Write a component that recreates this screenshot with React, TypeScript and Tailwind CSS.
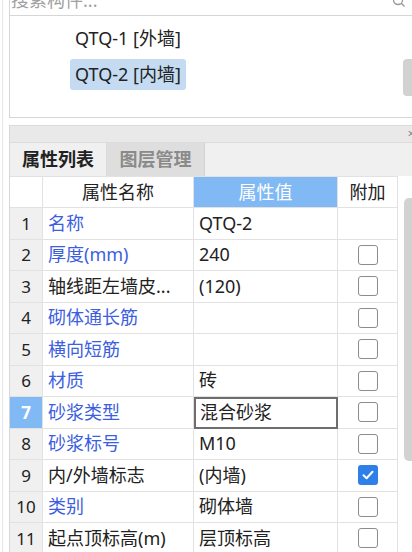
import React from 'react';

type Row = { name: string; blue: boolean; value: string; check?: boolean; checked?: boolean; editing?: boolean };

const rows: Row[] = [
  { name: '名称', blue: true, value: 'QTQ-2' },
  { name: '厚度(mm)', blue: true, value: '240', check: true },
  { name: '轴线距左墙皮...', blue: false, value: '(120)', check: true },
  { name: '砌体通长筋', blue: true, value: '', check: true },
  { name: '横向短筋', blue: true, value: '', check: true },
  { name: '材质', blue: true, value: '砖', check: true },
  { name: '砂浆类型', blue: true, value: '混合砂浆', check: true, editing: true },
  { name: '砂浆标号', blue: true, value: 'M10', check: true },
  { name: '内/外墙标志', blue: false, value: '(内墙)', check: true, checked: true },
  { name: '类别', blue: true, value: '砌体墙', check: true },
  { name: '起点顶标高(m)', blue: false, value: '层顶标高', check: true },
];

const CheckBox: React.FC<{ checked?: boolean }> = ({ checked }) =>
  checked ? (
    <div className="w-[20px] h-[20px] rounded-[3px] bg-[#2f7fe8] flex items-center justify-center">
      <svg width="14" height="14" viewBox="0 0 14 14" fill="none">
        <path d="M2.5 7.2 L5.6 10.2 L11.5 3.8" stroke="white" strokeWidth="2" strokeLinecap="round" strokeLinejoin="round" />
      </svg>
    </div>
  ) : (
    <div className="w-[20px] h-[20px] rounded-[3px] border-[1.5px] border-[#8c8c8c] bg-white" />
  );

const App: React.FC = () => {
  return (
    <div
      className="w-[412px] h-[552px] overflow-hidden bg-white flex text-[18px] text-[#222]"
      style={{ fontFamily: '"Noto Sans", "Noto Sans CJK SC", sans-serif' }}
    >
      <div className="w-[2px] shrink-0" />
      <div className="w-[7px] shrink-0 border-l border-[#e6e6e6]" />
      <div className="flex-1 flex flex-col min-w-0">
        {/* search row, mostly scrolled off */}
        <div className="h-[15px] shrink-0 border-l border-[#d6d6d6] relative overflow-hidden">
          <div className="-mt-[12px] pl-[1px] text-[#a0a0a0] leading-[24px]">搜索构件...</div>
          <svg className="absolute right-[6px] -top-[6px]" width="14" height="14" viewBox="0 0 14 14" fill="none">
            <circle cx="6" cy="6" r="4.5" stroke="#999" strokeWidth="1.3" />
            <path d="M9.3 9.3 L12.5 12.5" stroke="#999" strokeWidth="1.3" />
          </svg>
        </div>

        {/* component list */}
        <div className="h-[103px] shrink-0 border-l border-t border-b border-[#d6d6d6] relative flex flex-col gap-[5px] pt-[7px] pl-[60px]">
          <div className="h-[31px] px-[5px] self-start flex items-center rounded-[3px]">QTQ-1 [外墙]</div>
          <div className="h-[31px] px-[5px] self-start flex items-center rounded-[3px] bg-[#c4dbf2]">QTQ-2 [内墙]</div>
          <div className="absolute right-0 top-[43px] w-[9px] h-[37px] rounded-l-[4px] bg-[#d2d2d2]" />
        </div>

        <div className="h-[7px] shrink-0" />

        {/* properties panel */}
        <div className="flex-1 border-l border-[#d6d6d6] flex flex-col">
          <div className="h-[17px] shrink-0 bg-[#e9e9e9] border-t border-[#dadada] relative">
            <span className="absolute right-[-3px] top-[-3px] text-[13px] text-[#888] leading-[20px]">×</span>
          </div>
          <div className="h-[34px] shrink-0 bg-[#f0f0f0] border-t border-[#dcdcdc] flex">
            <div className="w-[97px] flex items-center justify-center font-bold text-[#222] border-r border-[#dadada]">属性列表</div>
            <div className="w-[98px] flex items-center justify-center font-bold text-[#8a8a8a] bg-[#dedede] border-r border-[#d2d2d2]">图层管理</div>
          </div>

          <div className="flex-1 flex relative">
            <div className="flex flex-col">
              {/* header */}
              <div className="h-[32px] shrink-0 flex border-t border-[#e2e2e2]">
                <div className="w-[33px] border-r border-b border-[#e2e2e2] bg-white" />
                <div className="w-[151px] border-r border-b border-[#e2e2e2] flex items-center justify-center">属性名称</div>
                <div className="w-[144px] border-r border-b border-[#e2e2e2] bg-[#80b9f4] text-white flex items-center justify-center">属性值</div>
                <div className="w-[60px] border-r border-b border-[#e2e2e2] flex items-center justify-center">附加</div>
              </div>
              {rows.map((r, i) => (
                <div key={i} className="h-[31.5px] shrink-0 flex">
                  <div
                    className={
                      r.editing
                        ? 'w-[33px] border-r border-b border-[#e2e2e2] bg-[#80b9f4] text-white font-bold text-[17px] flex items-center justify-center'
                        : 'w-[33px] border-r border-b border-[#e2e2e2] bg-[#f0f0f0] text-[17px] flex items-center justify-center'
                    }
                  >
                    {i + 1}
                  </div>
                  <div
                    className={
                      r.blue
                        ? 'w-[151px] border-r border-b border-[#e2e2e2] pl-[5px] flex items-center text-[#3c5ee0] whitespace-nowrap overflow-hidden'
                        : 'w-[151px] border-r border-b border-[#e2e2e2] pl-[5px] flex items-center whitespace-nowrap overflow-hidden'
                    }
                  >
                    {r.name}
                  </div>
                  <div
                    className={
                      r.editing
                        ? 'w-[144px] border-[2px] border-[#6e6e6e] pl-[4px] flex items-center'
                        : 'w-[144px] border-r border-b border-[#e2e2e2] pl-[5px] flex items-center'
                    }
                  >
                    {r.value}
                  </div>
                  <div className="w-[60px] border-r border-b border-[#e2e2e2] flex items-center justify-center">
                    {r.check && <CheckBox checked={r.checked} />}
                  </div>
                </div>
              ))}
            </div>
            <div className="absolute right-0 top-[22px] w-[8px] h-[263px] rounded-l-[5px] bg-[#d2d2d2]" />
          </div>
        </div>
      </div>
    </div>
  );
};

export default App;
